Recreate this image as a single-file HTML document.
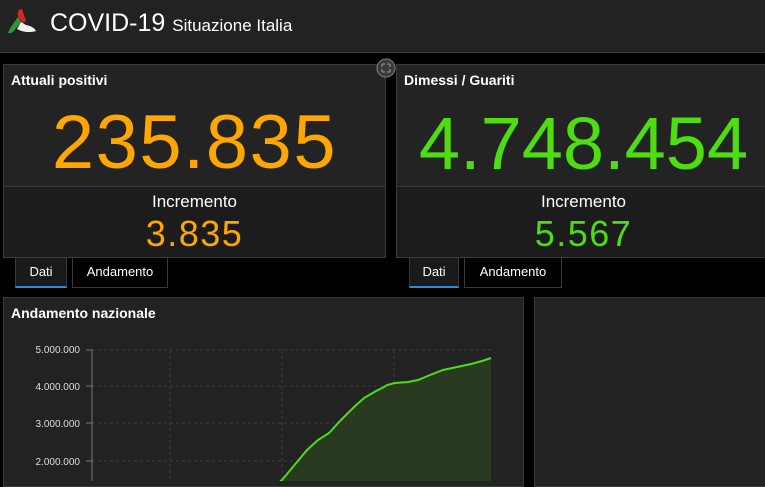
<!DOCTYPE html>
<html><head><meta charset="utf-8"><style>
*{margin:0;padding:0;box-sizing:border-box}
body{width:765px;height:481px;background:#000;font-family:"Liberation Sans",sans-serif;position:relative;overflow:hidden;color:#fff}
.hdr{position:absolute;left:0;top:0;width:765px;height:53px;background:#222;border-bottom:1px solid #3a3a3a}
.card{position:absolute;top:64px;height:194px;background:#232323;border:1px solid #3c3c3c}
.card .t{position:absolute;left:7px;top:7px;font-size:14px;font-weight:bold}
.big{position:absolute;top:40px;left:0;right:0;text-align:center;font-size:76px;line-height:76px;white-space:nowrap}
.low{position:absolute;left:0;right:0;top:121px;bottom:0;background:#1c1c1c;border-top:1px solid #3a3a3a;text-align:center}
.low .i{font-size:17px;margin-top:5px;line-height:20px}
.low .n{font-size:36px;line-height:40px;margin-top:2px;letter-spacing:1.5px}
.tab{position:absolute;top:258px;height:30px;font-size:13px;line-height:28px;text-align:center;border:1px solid #3a3a3a;border-top:none;background:#000}
.tab.a{background:#1a1a1a;border-bottom:2px solid #2a8ce0}
.panel{position:absolute;top:297px;height:190px;background:#222;border:1px solid #3a3a3a}
</style></head><body>
<div class="hdr">
<svg style="position:absolute;left:4px;top:7px" width="34" height="30" viewBox="0 0 34 30">
<path d="M18 2 C14 2 13 6 14 10 L19 16 L22 14 Z" fill="#d22"/>
<path d="M14 10 C10 16 6 20 4 26 C8 27 10 24 13 20 L17 15 Z" fill="#2a9a3a"/>
<path d="M17 15 L13 22 C18 25 26 26 32 24 C30 20 26 19 22 18 Z" fill="#f2f2f2"/>
</svg>
<div style="position:absolute;left:50px;top:9px;font-size:25px;line-height:28px">COVID-19 <span style="font-size:17px">Situazione Italia</span></div>
</div>

<div class="card" style="left:3px;width:383px">
<div class="t">Attuali positivi</div>
<div class="big" style="color:#ffa600;letter-spacing:1.5px">235.835</div>
<div class="low"><div class="i">Incremento</div><div class="n" style="color:#ffa600">3.835</div></div>
</div>
<svg style="position:absolute;left:376px;top:58px" width="20" height="20"><circle cx="10" cy="10" r="9" fill="#3a3a3a" stroke="#777" stroke-width="1.2"/><path d="M6 6h3M6 6v3M14 6h-3M14 6v3M6 14h3M6 14v-3M14 14h-3M14 14v-3" stroke="#999" stroke-width="1"/></svg>

<div class="card" style="left:396px;width:375px">
<div class="t">Dimessi / Guariti</div>
<div class="big" style="color:#4ddd11;font-size:74px;top:41px">4.748.454</div>
<div class="low"><div class="i">Incremento</div><div class="n" style="color:#4ddd11">5.567</div></div>
</div>

<div class="tab a" style="left:15px;width:52px">Dati</div>
<div class="tab" style="left:72px;width:96px">Andamento</div>
<div class="tab a" style="left:409px;width:50px">Dati</div>
<div class="tab" style="left:464px;width:98px">Andamento</div>

<div class="panel" style="left:3px;width:521px">
<div style="position:absolute;left:7px;top:7px;font-size:14px;font-weight:bold">Andamento nazionale</div>
</div>
<div class="panel" style="left:534px;width:240px"></div>

<svg style="position:absolute;left:0;top:297px" width="524" height="184">
<g font-size="10" fill="#ddd" text-anchor="end" font-family="Liberation Sans">
<text x="80" y="56">5.000.000</text><text x="80" y="93">4.000.000</text><text x="80" y="130">3.000.000</text><text x="80" y="168">2.000.000</text>
</g>
<g stroke="#3e3e3e" stroke-dasharray="3,3" stroke-width="1">
<line x1="92" y1="53" x2="491" y2="53"/><line x1="92" y1="89" x2="491" y2="89"/><line x1="92" y1="126" x2="491" y2="126"/><line x1="92" y1="164" x2="491" y2="164"/>
<line x1="170" y1="53" x2="170" y2="184"/><line x1="282" y1="53" x2="282" y2="184"/><line x1="394" y1="53" x2="394" y2="184"/>
</g>
<g stroke="#777"><line x1="86" y1="53" x2="92" y2="53"/><line x1="86" y1="89" x2="92" y2="89"/><line x1="86" y1="126" x2="92" y2="126"/><line x1="86" y1="164" x2="92" y2="164"/><line x1="92" y1="53" x2="92" y2="184"/></g>
<path d="M280 184 L282 183 L297 165 L307 153 L318 143 L329 136 L340 124 L354 110 L364 101 L376 94 L384 90 L387 88 L395 86 L408 85 L418 83 L430 78 L443 73 L457 70 L471 67 L482 64 L491 61 L491 184 Z" fill="#2a3a20"/>
<path d="M280 184 L282 183 L297 165 L307 153 L318 143 L329 136 L340 124 L354 110 L364 101 L376 94 L384 90 L387 88 L395 86 L408 85 L418 83 L430 78 L443 73 L457 70 L471 67 L482 64 L491 61" fill="none" stroke="#4ddd11" stroke-width="2"/>
</svg>
</body></html>
